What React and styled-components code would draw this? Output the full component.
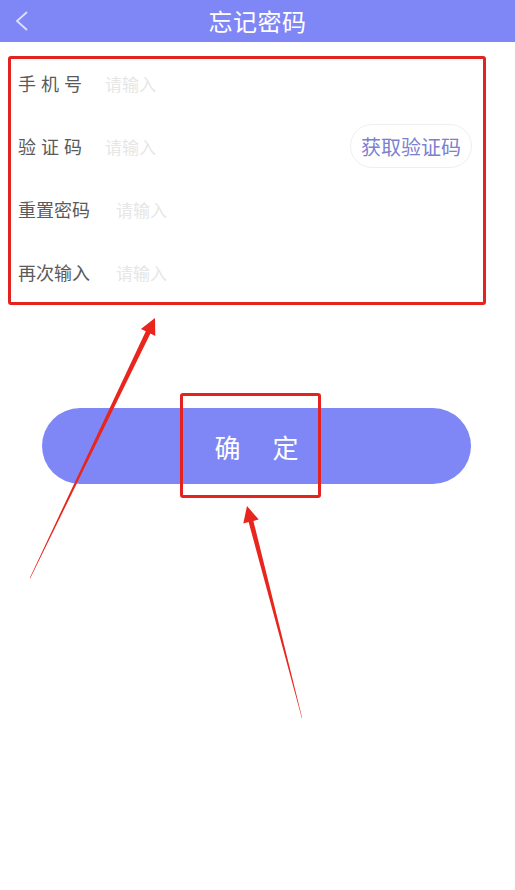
import styled, { createGlobalStyle } from 'styled-components';

const GlobalStyle = createGlobalStyle`
    body {
        margin: 0;
        background: #fff;
        font-family: "Noto Sans CJK SC", "Noto Sans", sans-serif;
    }
`

const Page = styled.div`
    position: relative;
    width: 100%;
    min-height: 890px;
    background: #fff;
    overflow: hidden;
`

const Header = styled.div`
    display: grid;
    grid-template-columns: 60px 1fr 60px;
    align-items: center;
    height: 42px;
    background: #7f87f7;
    color: #fff;
`

const BackBtn = styled.div`
    display: flex;
    align-items: center;
    padding-left: 14px;
    height: 100%;
`

const Title = styled.h1`
    margin: 0;
    text-align: center;
    font-size: 24px;
    font-weight: 400;
    line-height: 40px;
    letter-spacing: 0.5px;
`

const FormBox = styled.div`
    display: flex;
    flex-flow: column;
    gap: 19px;
    margin: 14px 29px 0 8px;
    padding: 2px 11px 8px 7px;
    border: 3px solid #e3231f;
    border-radius: 3px;
`

const Row = styled.div`
    display: flex;
    align-items: center;
    height: 44px;
`

const Label = styled.span`
    flex: none;
    width: ${({ w }) => w}px;
    font-size: 18px;
    color: #5a5a5a;
    letter-spacing: ${({ spaced }) => spaced ? "5px" : "0"};
    white-space: nowrap;
`

const Input = styled.input`
    width: 150px;
    border: none;
    outline: none;
    background: transparent;
    padding: 0;
    font-family: inherit;
    font-size: 17px;
    color: #333;

    &::placeholder {
        color: #e6e6e6;
    }
`

const CodeBtn = styled.button`
    margin-left: auto;
    height: 44px;
    padding: 0 10px;
    border: 1px solid #efeff3;
    border-radius: 22px;
    background: #fff;
    font-family: inherit;
    font-size: 20px;
    color: #7b80cf;
`

const ButtonWrap = styled.div`
    position: relative;
    margin: 103px 44px 0 42px;
`

const SubmitBtn = styled.button`
    display: block;
    width: 100%;
    height: 76px;
    border: none;
    border-radius: 38px;
    background: #7f87f7;
    color: #fff;
    font-family: inherit;
    font-size: 26px;
    letter-spacing: 32px;
    padding: 0 0 0 32px;
`

const MarkBox = styled.div`
    position: absolute;
    left: 138px;
    top: -15px;
    width: 141px;
    height: 105px;
    box-sizing: border-box;
    border: 3px solid #e3231f;
    border-radius: 3px;
    pointer-events: none;
`

const Arrows = styled.svg`
    position: absolute;
    left: 0;
    top: 0;
    pointer-events: none;
`

const fields = [
    { label: "手机号", w: 87, spaced: true },
    { label: "验证码", w: 87, spaced: true, code: true },
    { label: "重置密码", w: 98 },
    { label: "再次输入", w: 98 },
]

function App() {
    return (
        <Page>
            <GlobalStyle />
            <Header>
                <BackBtn>
                    <svg width="16" height="22" viewBox="0 0 16 22">
                        <polyline points="13,2 3,11 13,20" fill="none" stroke="#dde1ff" strokeWidth="1.8" />
                    </svg>
                </BackBtn>
                <Title>忘记密码</Title>
                <div />
            </Header>
            <FormBox>
                {fields.map(f => (
                    <Row key={f.label}>
                        <Label w={f.w} spaced={f.spaced}>{f.label}</Label>
                        <Input placeholder="请输入" />
                        {f.code && <CodeBtn>获取验证码</CodeBtn>}
                    </Row>
                ))}
            </FormBox>
            <ButtonWrap>
                <SubmitBtn>确定</SubmitBtn>
                <MarkBox />
            </ButtonWrap>
            {/* annotation arrows */}
            <Arrows width="515" height="890" viewBox="0 0 515 890">
                <polygon
                    fill="#e8261e"
                    points="29.8,578 145.8,331.3 140.9,328.9 155,318 155.3,335.9 150.4,333.5 30.3,578.2"
                />
                <polygon
                    fill="#e8261e"
                    points="302.2,718 253.4,520.9 258.7,519.5 247,506 243.3,523.5 248.6,522.1 301.8,718"
                />
            </Arrows>
        </Page>
    )
}

export default App;
